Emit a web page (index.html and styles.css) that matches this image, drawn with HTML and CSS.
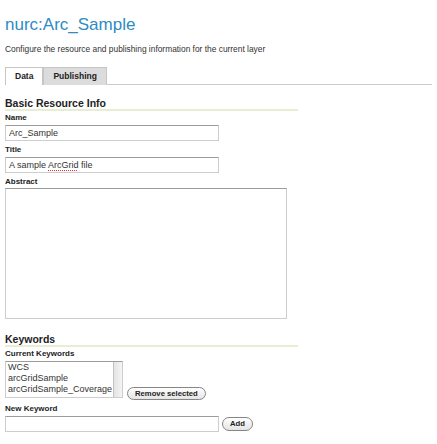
FILE: index.html
```html
<!DOCTYPE html>
<html lang="en">
<head>
    <meta charset="UTF-8">
    <meta name="viewport" content="width=device-width, initial-scale=1.0">
    <title>nurc:Arc_Sample</title>
    <link rel="stylesheet" href="styles.css">
</head>
<body>
    <div class="page">
        <h1 class="page-title">nurc:Arc_Sample</h1>
        <p class="page-desc">Configure the resource and publishing information for the current layer</p>

        <ul class="tabs">
            <li class="tab tab-active">Data</li>
            <li class="tab">Publishing</li>
        </ul>

        <h2 class="section-title">Basic Resource Info</h2>
        <label class="field-label first" for="name">Name</label>
        <input class="text-input" type="text" id="name" value="Arc_Sample">

        <label class="field-label">Title</label>
        <!-- title box keeps the spellcheck mark, so it is a plain div -->
        <div class="text-input">A sample <span class="misspelt">ArcGrid</span> file</div>

        <label class="field-label" for="abstract">Abstract</label>
        <textarea class="text-area" id="abstract"></textarea>

        <h2 class="section-title keywords-title">Keywords</h2>
        <label class="field-label first">Current Keywords</label>
        <div class="keyword-row">
            <div class="keyword-list">
                <ul class="keyword-items">
                    <li>WCS</li>
                    <li>arcGridSample</li>
                    <li>arcGridSample_Coverage</li>
                </ul>
                <div class="scroll-track"></div>
            </div>
            <button class="pill-btn remove-btn" type="button">Remove selected</button>
        </div>

        <label class="field-label new-keyword" for="newKeyword">New Keyword</label>
        <div class="add-row">
            <input class="text-input" type="text" id="newKeyword">
            <button class="pill-btn add-btn" type="button">Add</button>
        </div>
    </div>
</body>
</html>
```

FILE: styles.css
```css
body {
    margin: 0;
    background: #fff;
    color: #333;
    font-family: "Liberation Sans", Arial, sans-serif;
}

.page {
    padding: 15px 5px 0;
}

.page-title {
    margin: 0;
    font-size: 17px;
    line-height: 20px;
    font-weight: normal;
    color: #2e8bc3;
}

.page-desc {
    margin: 9px 0 0;
    font-size: 8.4px;
    line-height: 10px;
    color: #333;
}

/* tab strip */
.tabs {
    list-style: none;
    display: flex;
    height: 17px;
    margin: 13px 0 0;
    padding: 0;
    border-bottom: 1px solid #ccc;
}

.tab {
    flex: none;
    box-sizing: border-box;
    height: 18px;
    padding: 0 9px;
    border: 1px solid #c6c6c6;
    border-bottom: none;
    background: #dcdcdc;
    color: #222;
    font-size: 8.5px;
    font-weight: bold;
    line-height: 17px;
}

.tab-active {
    background: #fff;
}

/* sections */
.section-title {
    width: 293px;
    margin: 13px 0 0;
    font-size: 10.5px;
    line-height: 11px;
    font-weight: bold;
    color: #222;
    border-bottom: 2px solid #e8eed3;
}

.keywords-title {
    margin-top: 15px;
}

.field-label {
    display: block;
    margin-top: 4px;
    font-size: 8px;
    line-height: 10px;
    font-weight: bold;
    color: #222;
}

.field-label.first {
    margin-top: 2px;
}

.text-input {
    display: block;
    box-sizing: border-box;
    width: 214px;
    height: 16px;
    margin: 2px 0 0;
    padding: 0 3px;
    border: 1px solid #cdcdcd;
    border-top-color: #9c9c9c;
    background: #fff;
    color: #333;
    font-family: "Liberation Sans", Arial, sans-serif;
    font-size: 9px;
    line-height: 14px;
    outline: none;
}

.misspelt {
    text-decoration: underline dotted #e03a3a;
    text-underline-offset: 2px;
}

.text-area {
    display: block;
    box-sizing: border-box;
    width: 282px;
    height: 131px;
    margin: 1px 0 0;
    padding: 2px;
    border: 1px solid #cdcdcd;
    border-top-color: #9c9c9c;
    resize: none;
    outline: none;
}

/* keyword list + remove */
.keyword-row {
    display: flex;
    align-items: flex-end;
    margin-top: 2px;
}

.keyword-list {
    display: flex;
    box-sizing: border-box;
    width: 118px;
    height: 37px;
    border: 1px solid #cdcdcd;
    border-top-color: #9c9c9c;
}

.keyword-items {
    flex: 1;
    list-style: none;
    margin: 0;
    padding: 0 0 0 2px;
    font-size: 9px;
    line-height: 11px;
    color: #333;
    white-space: nowrap;
    overflow: hidden;
}

.scroll-track {
    width: 8px;
    border-left: 1px solid #c4c4c4;
    background: linear-gradient(to right, #e4e4e4, #f4f4f4);
}

.pill-btn {
    box-sizing: border-box;
    margin: 0;
    padding: 0 7px;
    border: 1px solid #858585;
    border-radius: 8px;
    background: linear-gradient(#ffffff, #e4e4e4);
    color: #222;
    font-family: "Liberation Sans", Arial, sans-serif;
    font-size: 7.7px;
    font-weight: bold;
    cursor: pointer;
}

.remove-btn {
    height: 13px;
    margin-left: 4px;
    margin-bottom: -2px;
    line-height: 11px;
}

.new-keyword {
    margin-top: 6px;
}

.add-row {
    display: flex;
    align-items: center;
    gap: 3px;
    margin-top: 2px;
}

.add-row .text-input {
    margin: 0;
}

.add-btn {
    height: 14px;
    line-height: 12px;
}
```
